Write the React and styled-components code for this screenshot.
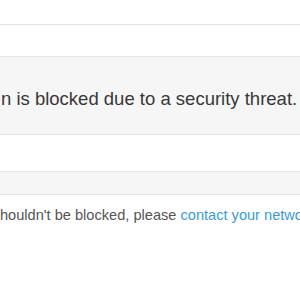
import React from "react";
import styled, { createGlobalStyle } from "styled-components";

const Global = createGlobalStyle`
  html, body { margin: 0; padding: 0; background: #ffffff; }
  body { font-family: "Liberation Sans", Arial, sans-serif; overflow: hidden; }
`;

const Page = styled.div`
  width: 300px;
  height: 300px;
  overflow: hidden;
  display: flex;
  flex-direction: column;
`;

const Header = styled.div`
  height: 24px;
  border-bottom: 1px solid #e2e2e2;
`;

const Gap = styled.div`
  height: ${(p) => p.h}px;
`;

const Notice = styled.div`
  background: #f6f6f6;
  border-top: 1px solid #e6e6e6;
  border-bottom: 1px solid #e6e6e6;
  padding: 30px 0 23px;
`;

const Headline = styled.h1`
  margin: 0;
  font-size: 18.5px;
  font-weight: normal;
  line-height: 24px;
  color: #383838;
  white-space: nowrap;
  text-indent: 1px;
`;

const Band = styled.div`
  height: 22px;
  background: #f6f6f6;
  border-top: 1px solid #e6e6e6;
  border-bottom: 1px solid #e6e6e6;
`;

const Help = styled.p`
  margin: 10px 0 0;
  font-size: 14.6px;
  line-height: 20px;
  color: #555555;
  white-space: nowrap;
`;

const Link = styled.a`
  color: #3a9bd5;
  text-decoration: none;
`;

export default function App() {
  return (
    <>
      <Global />
      <Page>
        <Header />
        <Gap h={31} />
        <Notice>
          <Headline>n is blocked due to a security threat.</Headline>
        </Notice>
        <Gap h={36} />
        <Band />
        <Help>
          houldn't be blocked, please <Link href="#">contact your network administrator</Link>.
        </Help>
      </Page>
    </>
  );
}
